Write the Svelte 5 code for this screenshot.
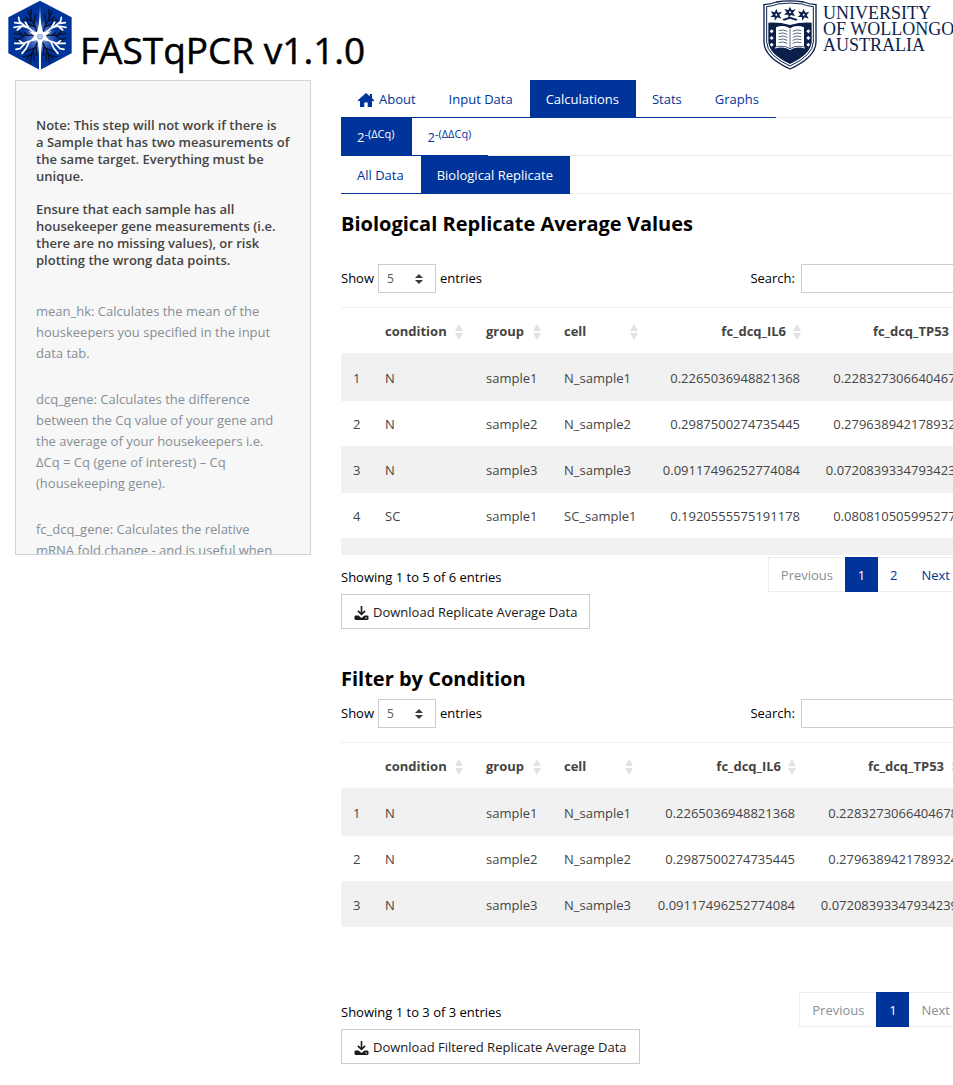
<script>
  const mainTabs = ['About', 'Input Data', 'Calculations', 'Stats', 'Graphs'];
  const headers = ['condition', 'group', 'cell', 'fc_dcq_IL6', 'fc_dcq_TP53'];
  const rows = [
    ['1', 'N', 'sample1', 'N_sample1', '0.2265036948821368', '0.2283273066404678'],
    ['2', 'N', 'sample2', 'N_sample2', '0.2987500274735445', '0.2796389421789324'],
    ['3', 'N', 'sample3', 'N_sample3', '0.09117496252774084', '0.07208393347934239'],
    ['4', 'SC', 'sample1', 'SC_sample1', '0.1920555575191178', '0.0808105059952771'],
    ['', '', '', '', '', '']
  ];
  const panels = [
    { id: 'all', cls: 'wide', title: 'Biological Replicate Average Values', rows, info: 'Showing 1 to 5 of 6 entries', pages: ['1', '2'], button: 'Download Replicate Average Data' },
    { id: 'filtered', cls: 'narrow', title: 'Filter by Condition', rows: rows.slice(0, 3), info: 'Showing 1 to 3 of 3 entries', pages: ['1'], button: 'Download Filtered Replicate Average Data' }
  ];
</script>

<div class="page">
  <header>
    <svg class="hex" viewBox="0 0 192 210" aria-hidden="true">
      <defs>
        <radialGradient id="glow"><stop offset="0" stop-color="#a9bfec" /><stop offset=".5" stop-color="#4a70c4" /><stop offset="1" stop-color="#00349a" /></radialGradient>
      </defs>
      <path d="M96 2 191 52V160L96 210 1 160V52Z" fill="#00349a" />
      <circle cx="96" cy="110" r="52" fill="url(#glow)" />
      <g fill="none" stroke-linecap="round" stroke-linejoin="round">
        <g stroke="#06122e" stroke-width="4">
          <path d="M88 96 73 64 60 34M73 64 52 52M68 52 70 28M78 74 82 44M82 80 60 72M60 64 45 60" />
          <path d="M80 106H50L20 100M50 106 34 118 18 116M42 104 30 92M60 106 50 98M34 118 28 126" />
          <path d="M88 128 76 152 56 178M76 152 78 182M67 166 45 170M80 144 52 156M72 160 66 190M84 140 86 166" />
          <path d="M104 96 119 64 132 34M119 64 140 52M124 52 122 28M114 74 110 44M110 80 132 72M132 64 147 60" />
          <path d="M112 106H142L172 100M142 106 158 118 174 116M150 104 162 92M132 106 142 98M158 118 164 126" />
          <path d="M104 128 116 152 136 178M116 152 114 182M125 166 147 170M112 144 140 156M120 160 126 190M108 140 106 166" />
        </g>
        <g stroke="#fff" stroke-width="5">
          <path d="M92 108 62 84 42 78 18 82M56 82 34 64 32 52M42 71 20 68M62 84 52 66M42 78 28 90" />
          <path d="M92 114 64 124 46 130 20 130M54 127 36 146 24 148M64 124 54 146 42 160M46 130 34 122" />
          <path d="M100 108 130 84 150 78 174 82M136 82 158 64 160 52M150 71 172 68M130 84 140 66M150 78 164 90" />
          <path d="M100 114 128 124 146 130 172 130M138 127 156 146 168 148M128 124 138 146 150 160M146 130 158 122" />
        </g>
      </g>
      <path d="M96 18Q98 84 106 97L130 94 113 108 126 124 105 121Q98 134 99 210H93Q94 134 87 121L66 124 79 108 62 94 86 97Q94 84 96 18Z" fill="#fff" />
      <circle cx="96" cy="110" r="9" fill="#9bb3e0" /><circle cx="96" cy="110" r="4" fill="#c9d6f2" />
    </svg>
    <h1>FASTqPCR v1.1.0</h1>
    <div class="uni">
      <svg viewBox="0 0 162 210" aria-hidden="true">
        <path d="M3 14Q26 12 40 6 80-1 122 6 136 12 159 14V126Q158 172 81 207 4 172 3 126Z" fill="#fff" stroke="#0b1f4b" stroke-width="4" />
        <path d="M11 20Q36 17 44 12 80 6 118 12 126 17 151 20V126Q150 166 81 198 12 166 11 126Z" fill="#fff" stroke="#0b1f4b" stroke-width="3" />
        <path d="M16 68Q50 66 81 75 112 66 146 68V126Q144 162 81 192 18 162 16 126Z" fill="#0b1f4b" />
        <g fill="#0b1f4b">
          {#each [[40, 44], [81, 37], [122, 44]] as [x, y]}
            <g transform="translate({x} {y})">
              <path d="M0-17 5-6 17-9 9 1 15 12 3 8-5 18-5 7-18 7-10 0-17-10-5-7Z" />
              <circle r="3" fill="#fff" />
            </g>
          {/each}
          <path d="M58 58 81 50 104 58 99 62 81 56 63 62Z" />
        </g>
        <path d="M39 82Q62 72 81 85 100 72 123 82V140Q100 132 81 145 62 132 39 140Z" fill="#fff" />
        <path d="M81 86V143M47 92Q61 87 73 94M47 101Q61 96 73 103M47 110Q61 105 73 112M47 119Q61 114 73 121M47 128Q61 123 73 130M89 94Q101 87 115 92M89 103Q101 96 115 101M89 112Q101 105 115 110M89 121Q101 114 115 119M89 130Q101 123 115 128" fill="none" stroke="#0b1f4b" stroke-width="2" />
        <path d="M36 144Q62 136 81 149 100 136 126 144" fill="none" stroke="#fff" stroke-width="3" />
        <g fill="#fff">
          {#each [94, 114, 134] as y}
            <path d="M26 {y - 6}l6 6-6 6-6-6ZM136 {y - 6}l6 6-6 6-6-6Z" />
          {/each}
        </g>
      </svg>
      <p>UNIVERSITY<br />OF WOLLONGONG<br />AUSTRALIA</p>
    </div>
  </header>

  <div class="columns">
    <aside>
      <div class="note">
        <p>Note: This step will not work if there is<br />a Sample that has two measurements of the same target. Everything must be unique.</p>
        <p>Ensure that each sample has all housekeeper gene measurements (i.e. there are no missing values), or risk plotting the wrong data points.</p>
      </div>
      <div class="help">
        <p>mean_hk: Calculates the mean of the houskeepers you specified in the input data tab.</p>
        <p>dcq_gene: Calculates the difference between the Cq value of your gene and the average of your housekeepers i.e. ΔCq = Cq (gene of interest) – Cq (housekeeping gene).</p>
        <p>fc_dcq_gene: Calculates the relative mRNA fold change - and is useful when</p>
      </div>
    </aside>

    <main>
      <nav>
        {#each mainTabs as tab}
          <a href="#{tab}" class:active={tab === 'Calculations'}>
            {#if tab === 'About'}
              <svg class="home" viewBox="0 0 18 16" aria-hidden="true"><path d="M9 1 .8 8.2 1.8 9.4 3 8.5V15H7.3V10.5H10.7V15H15V8.5L16.2 9.4 17.2 8.2 15 6.3V2H12.8V4.3Z" fill="currentColor" /></svg>
            {/if}{tab}
          </a>
        {/each}
      </nav>
      <nav>
        <a href="#dcq" class="active"><span>2<sup>-(ΔCq)</sup></span></a>
        <a href="#ddcq"><span>2<sup>-(ΔΔCq)</sup></span></a>
      </nav>
      <nav>
        <a href="#all-data">All Data</a>
        <a href="#replicate" class="active">Biological Replicate</a>
      </nav>

      {#each panels as panel}
        <section class={panel.cls}>
          <h2>{panel.title}</h2>
          <div class="controls">
            <label>Show
              <select><option>5</option><option>10</option><option>25</option></select>
              entries</label>
            <label class="search">Search: <input type="search" /></label>
          </div>
          <div class="scroll">
            <table>
              <colgroup><col class="c0" /><col class="c1" /><col class="c2" /><col class="c3" /><col class="c4" /><col class="c4" /></colgroup>
              <thead>
                <tr>
                  <th></th>
                  {#each headers as h, i}
                    <th class:num={i > 2}><span>{h}<svg viewBox="0 0 8 16" aria-hidden="true"><path d="M0 7 4 0 8 7ZM0 9 4 16 8 9Z" fill="#e2e2e2" /></svg></span></th>
                  {/each}
                </tr>
              </thead>
              <tbody>
                {#each panel.rows as row}
                  <tr>{#each row as cell, i}<td class:num={i > 3}>{cell}</td>{/each}</tr>
                {/each}
              </tbody>
            </table>
          </div>
          <div class="foot">
            <p>{panel.info}</p>
            <div class="pager">
              <button class="muted">Previous</button>
              {#each panel.pages as p, i}<button class:current={i === 0}>{p}</button>{/each}
              <button class:muted={panel.pages.length === 1}>Next</button>
            </div>
          </div>
          <button class="download">
            <svg viewBox="0 0 14 14" aria-hidden="true"><path d="M6.2 0H7.8V6.4L10 4.2 11.2 5.4 7 9.6 2.8 5.4 4 4.2 6.2 6.4ZM1.5 9.5H4L7 12 10 9.5H12.5Q14 9.5 14 10.8V12.7Q14 14 12.5 14H1.5Q0 14 0 12.7V10.8Q0 9.5 1.5 9.5Z" fill="currentColor" /><circle cx="11.6" cy="12" r=".7" fill="#fff" /></svg>
            {panel.button}
          </button>
        </section>
      {/each}
    </main>
  </div>
</div>

<style>
  :global(body) { margin: 0; background: #fff; overflow-x: hidden; }
  :global(*) { box-sizing: border-box; }
  .page { min-width: 978px; font: 13px/21px "Open Sans", "Noto Sans", sans-serif; color: #000; }
  p, h1, h2 { margin: 0; }
  header { display: flex; height: 80px; padding: 0 15px 0 8px; }
  .hex { width: 64px; height: 70px; flex: none; }
  h1 { margin-left: 8px; padding-top: 25px; font-size: 37px; line-height: 50px; font-weight: 500; white-space: nowrap; -webkit-text-stroke: 0.5px; }
  .uni { display: flex; margin-left: auto; width: 200px; flex: none; color: #0b1f4b; }
  .uni svg { width: 54px; height: 70px; flex: none; }
  .uni p { padding: 5px 0 0 6px; font: 18px/16px "Liberation Serif", serif; white-space: nowrap; }
  .columns { display: grid; grid-template-columns: 1fr 2fr; }
  aside { height: 475px; margin: 0 15px; padding: 36px 16px 0 20px; overflow: hidden; background: #f7f7f7; border: 1px solid #d4d4d4; }
  .note { font-weight: 600; line-height: 17px; color: #444; }
  .note p { margin-bottom: 16px; }
  .help { margin-top: 32px; padding-right: 8px; color: #868e96; }
  .help p { margin-bottom: 25px; }
  main { min-width: 0; padding: 0 15px; }
  nav { display: flex; height: 38px; border-bottom: 1px solid #ececec; }
  nav a { display: flex; align-items: center; height: 38px; padding: 2px 17px 0 16px; color: #00349a; text-decoration: none; border-bottom: 1px solid #00349a; white-space: nowrap; }
  nav a.active { background: #00349a; color: #fff; }
  sup { font-size: 11px; line-height: 0; vertical-align: 4px; }
  .home { width: 18px; height: 16px; margin-right: 4px; }
  h2 { font-size: 20px; line-height: 24px; font-weight: 700; }
  section { padding-top: 18px; }
  .wide h2 { margin-bottom: 28px; }
  .narrow { padding-top: 38px; }
  .narrow h2 { margin-bottom: 8px; }
  .controls { display: flex; justify-content: space-between; height: 43px; }
  .controls label { display: flex; align-items: center; gap: 4px; height: 29px; }
  select { appearance: none; width: 58px; height: 29px; padding: 0 8px; border: 1px solid #ccc; border-radius: 0; color: #55595c; font: 12px "Open Sans", sans-serif;
    background: #fff url("data:image/svg+xml,%3Csvg xmlns='http://www.w3.org/2000/svg' viewBox='0 0 4 5'%3E%3Cpath fill='%23343a40' d='M2 0L0 2h4zm0 5L0 3h4z'/%3E%3C/svg%3E") no-repeat right 12px center / 8px 10px; }
  .controls .search { gap: 6px; }
  input { width: 162px; height: 29px; border: 1px solid #ccc; border-radius: 0; background: #fff; }
  .scroll { height: 248px; overflow: hidden; }
  table { table-layout: fixed; border-collapse: separate; border-spacing: 0; width: 634px; color: #444; }
  .narrow table { width: 629px; }
  .c0 { width: 32px; } .c1 { width: 101px; } .c2 { width: 78px; } .c3 { width: 97px; } .c4 { width: 163px; }
  .narrow .c3 { width: 92px; }
  th, td { padding: 13px 12px 11px; border-top: 1px solid #f1f1f1; text-align: left; white-space: nowrap; }
  th { padding-right: 11px; font-weight: 700; }
  th span { display: flex; align-items: center; justify-content: space-between; gap: 7px; }
  th svg { width: 8px; height: 16px; flex: none; }
  th.num span { justify-content: flex-end; }
  td.num { text-align: right; }
  tbody tr:first-child td { padding-top: 14px; }
  tbody tr:nth-child(odd) td { background: #f1f1f1; }
  .foot { display: flex; justify-content: space-between; height: 39px; padding-top: 2px; }
  .foot p { padding-top: 10px; }
  .pager { display: flex; height: 35px; border: 1px solid #ececec; }
  button { font: inherit; white-space: nowrap; cursor: pointer; }
  .pager button { height: 35px; margin-top: -1px; padding: 2px 12px 0; border: 0; background: none; color: #00349a; }
  .pager .muted { color: #888f96; }
  .pager .current { min-width: 33px; background: #00349a; color: #fff; }
  .download { display: flex; align-items: center; gap: 4px; height: 35px; padding: 2px 12px 0; border: 1px solid #ccc; background: #fff; color: #1a1a1a; }
  .download svg { width: 15px; height: 14px; }
</style>
